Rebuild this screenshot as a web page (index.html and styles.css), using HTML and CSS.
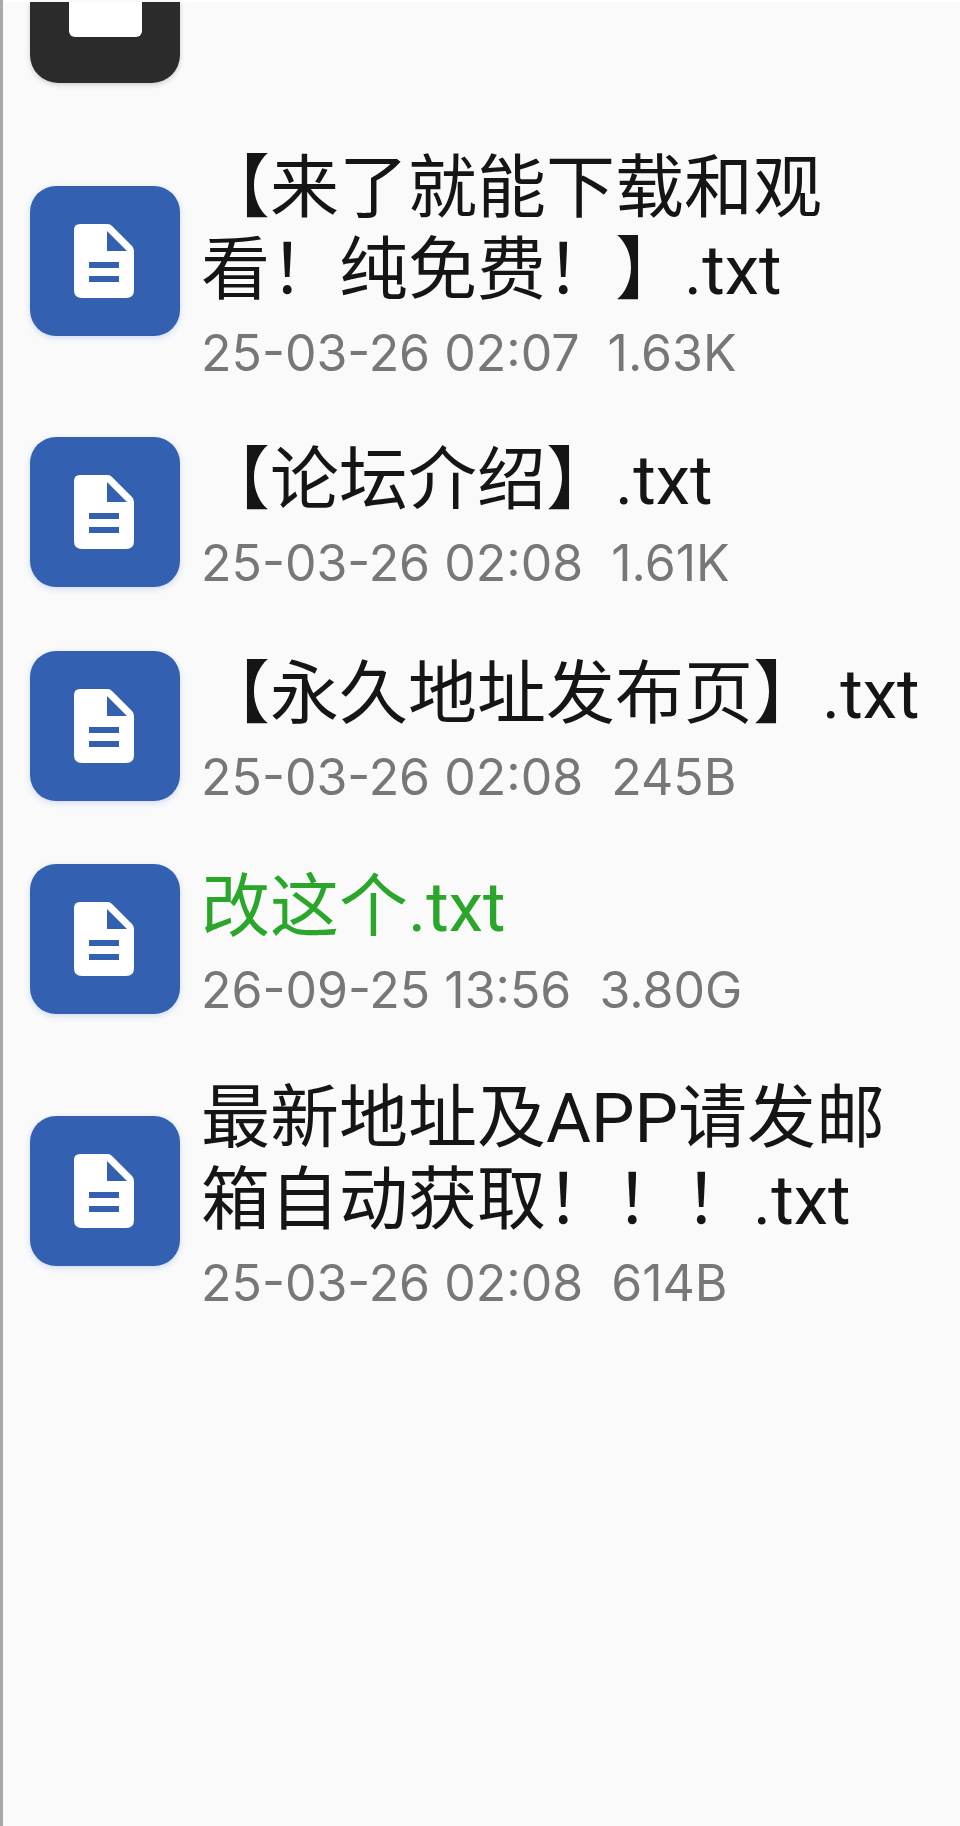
FILE: index.html
```html
<!DOCTYPE html>
<html lang="zh-CN">
<head>
<meta charset="utf-8">
<title>文件列表</title>
<link rel="stylesheet" href="styles.css">
</head>
<body>
<svg class="defs" width="0" height="0" aria-hidden="true">
  <symbol id="doc" viewBox="0 0 60 74">
    <path fill="#fff" d="M6 0H34Q36 0 38 2L58 22Q60 24 60 27V66Q60 74 52 74H8Q0 74 0 66V6Q0 0 6 0Z"/>
    <path fill="#3460b2" d="M33 7L53 27H33Z"/>
    <rect fill="#3460b2" x="15" y="38" width="30" height="6"/>
    <rect fill="#3460b2" x="15" y="52" width="30" height="6"/>
  </symbol>
</svg>
<main class="list">
  <div class="partial"><div class="folder"><div class="folder-inner"></div></div></div>

  <article class="row">
    <div class="icon"><svg class="doc"><use href="#doc"/></svg></div>
    <div class="text">
      <div class="name">【来了就能下载和观看！纯免费！】.txt</div>
      <div class="meta">25-03-26 02:07&nbsp;&nbsp;1.63K</div>
    </div>
  </article>

  <article class="row">
    <div class="icon"><svg class="doc"><use href="#doc"/></svg></div>
    <div class="text">
      <div class="name">【论坛介绍】.txt</div>
      <div class="meta">25-03-26 02:08&nbsp;&nbsp;1.61K</div>
    </div>
  </article>

  <article class="row">
    <div class="icon"><svg class="doc"><use href="#doc"/></svg></div>
    <div class="text">
      <div class="name">【永久地址发布页】.txt</div>
      <div class="meta">25-03-26 02:08&nbsp;&nbsp;245B</div>
    </div>
  </article>

  <article class="row">
    <div class="icon"><svg class="doc"><use href="#doc"/></svg></div>
    <div class="text">
      <div class="name name-active">改这个.txt</div>
      <div class="meta">26-09-25 13:56&nbsp;&nbsp;3.80G</div>
    </div>
  </article>

  <article class="row">
    <div class="icon"><svg class="doc"><use href="#doc"/></svg></div>
    <div class="text">
      <div class="name">最新地址及APP请发邮箱自动获取！！！.txt</div>
      <div class="meta">25-03-26 02:08&nbsp;&nbsp;614B</div>
    </div>
  </article>
</main>
</body>
</html>
```

FILE: styles.css
```css
* { box-sizing: border-box; }
html, body { margin: 0; padding: 0; }
body {
  width: 960px;
  height: 1826px;
  overflow: hidden;
  background: #fafafa;
  border-left: 3px solid #a9a9a9;
  font-family: Roboto, "Noto Sans CJK SC", sans-serif;
}
.defs { display: block; position: absolute; }
.list { display: flex; flex-direction: column; padding-left: 27px; padding-right: 20px; border-top: 2px solid #fff; }
.partial { height: 81px; margin-bottom: 65px; }
.folder {
  width: 150px;
  height: 81px;
  background: #2b2b2b;
  border-radius: 0 0 28px 28px;
  box-shadow: 0 2px 5px rgba(0,0,0,.18);
  display: flex;
  justify-content: center;
}
.folder-inner { width: 73px; height: 35px; background: #fff; border-radius: 0 0 6px 6px; }
.row { display: flex; align-items: center; gap: 21px; margin-bottom: 43.4px; }
.icon {
  flex: none;
  width: 150px;
  height: 150px;
  margin-bottom: 20px;
  padding-right: 2px;
  background: #3460b2;
  border-radius: 26px;
  box-shadow: 0 2px 6px rgba(60,110,220,.22);
  display: flex;
  align-items: center;
  justify-content: center;
}
.doc { width: 60px; height: 74px; }
.text { flex: 1; min-width: 0; }
.name { font-size: 69px; line-height: 82px; color: #151515; }
.name-active { color: #2aa62a; }
.meta { font-family: Inter, Roboto, sans-serif; font-size: 50px; line-height: 82px; color: #777; white-space: nowrap; }
```
